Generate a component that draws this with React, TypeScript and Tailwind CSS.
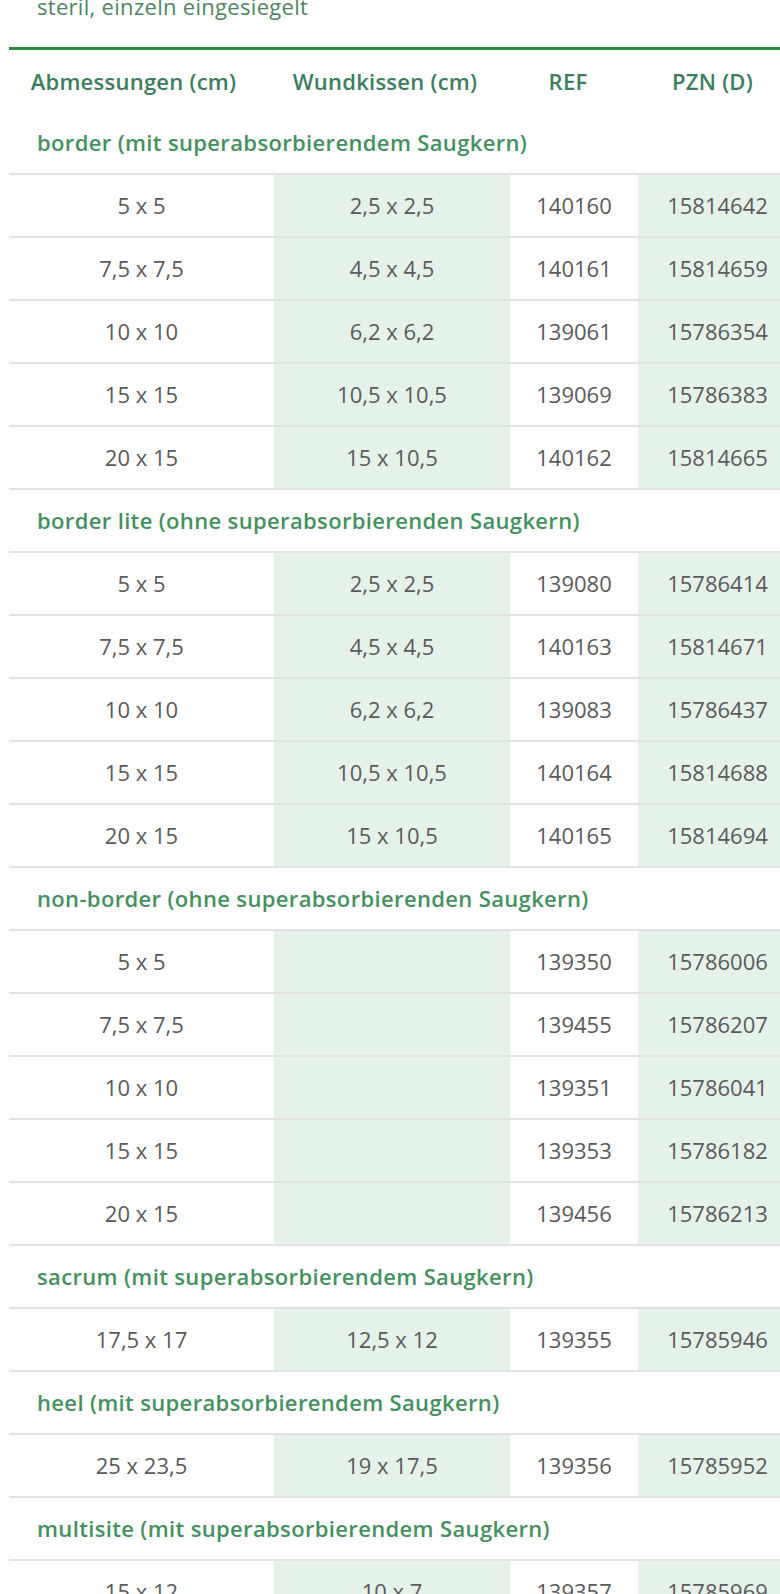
import React from "react";

type Row = [string, string, string, string];
type Section = { title: string; rows: Row[] };

const sections: Section[] = [
  {
    title: "border (mit superabsorbierendem Saugkern)",
    rows: [
      ["5 x 5", "2,5 x 2,5", "140160", "15814642"],
      ["7,5 x 7,5", "4,5 x 4,5", "140161", "15814659"],
      ["10 x 10", "6,2 x 6,2", "139061", "15786354"],
      ["15 x 15", "10,5 x 10,5", "139069", "15786383"],
      ["20 x 15", "15 x 10,5", "140162", "15814665"],
    ],
  },
  {
    title: "border lite (ohne superabsorbierenden Saugkern)",
    rows: [
      ["5 x 5", "2,5 x 2,5", "139080", "15786414"],
      ["7,5 x 7,5", "4,5 x 4,5", "140163", "15814671"],
      ["10 x 10", "6,2 x 6,2", "139083", "15786437"],
      ["15 x 15", "10,5 x 10,5", "140164", "15814688"],
      ["20 x 15", "15 x 10,5", "140165", "15814694"],
    ],
  },
  {
    title: "non-border (ohne superabsorbierenden Saugkern)",
    rows: [
      ["5 x 5", "", "139350", "15786006"],
      ["7,5 x 7,5", "", "139455", "15786207"],
      ["10 x 10", "", "139351", "15786041"],
      ["15 x 15", "", "139353", "15786182"],
      ["20 x 15", "", "139456", "15786213"],
    ],
  },
  {
    title: "sacrum (mit superabsorbierendem Saugkern)",
    rows: [["17,5 x 17", "12,5 x 12", "139355", "15785946"]],
  },
  {
    title: "heel (mit superabsorbierendem Saugkern)",
    rows: [["25 x 23,5", "19 x 17,5", "139356", "15785952"]],
  },
  {
    title: "multisite (mit superabsorbierendem Saugkern)",
    rows: [["15 x 12", "10 x 7", "139357", "15785969"]],
  },
];

const grid = "grid grid-cols-[265px_236px_128px_159px]";

export default function App() {
  return (
    <div
      className="w-[780px] h-[1594px] overflow-hidden bg-white"
      style={{ fontFamily: '"Open Sans", "Noto Sans", sans-serif' }}
    >
      <div className="mt-[-9px] pl-[37px] text-[22px] leading-[30px] tracking-[0.3px] text-[#4f8563]">
        steril, einzeln eingesiegelt
      </div>
      <div className="ml-[9px] mt-[26px] w-[788px]">
        <div className="h-[3px] bg-[#2b8c42]" />
        <div className={`${grid} h-[62px] text-[22px] font-semibold tracking-[0.25px] text-[#3b7e5e]`}>
          <div className="flex items-center justify-center pr-[16px]">Abmessungen (cm)</div>
          <div className="flex items-center justify-center pr-[14px]">Wundkissen (cm)</div>
          <div className="flex items-center justify-center pr-[12px]">REF</div>
          <div className="flex items-center justify-center pr-[10px]">PZN (D)</div>
        </div>
        {sections.map((s, si) => (
          <div key={si}>
            <div
              className={`${
                si === 0 ? "h-[61px]" : "h-[63px] border-t-2 border-[#e2e2e2]"
              } flex items-center pl-[28px] text-[22px] font-semibold tracking-[0.35px] text-[#44905f]`}
            >
              {s.title}
            </div>
            {s.rows.map((r, ri) => (
              <div
                key={ri}
                className={`${grid} h-[63px] border-t-2 border-[#e2e2e2] text-[22px] text-[#5a5a5a]`}
              >
                <div className="flex items-center justify-center">{r[0]}</div>
                <div className="flex items-center justify-center bg-[#e5f2e9]">{r[1]}</div>
                <div className="flex items-center justify-center">{r[2]}</div>
                <div className="flex items-center justify-center bg-[#e5f2e9]">{r[3]}</div>
              </div>
            ))}
          </div>
        ))}
      </div>
    </div>
  );
}
